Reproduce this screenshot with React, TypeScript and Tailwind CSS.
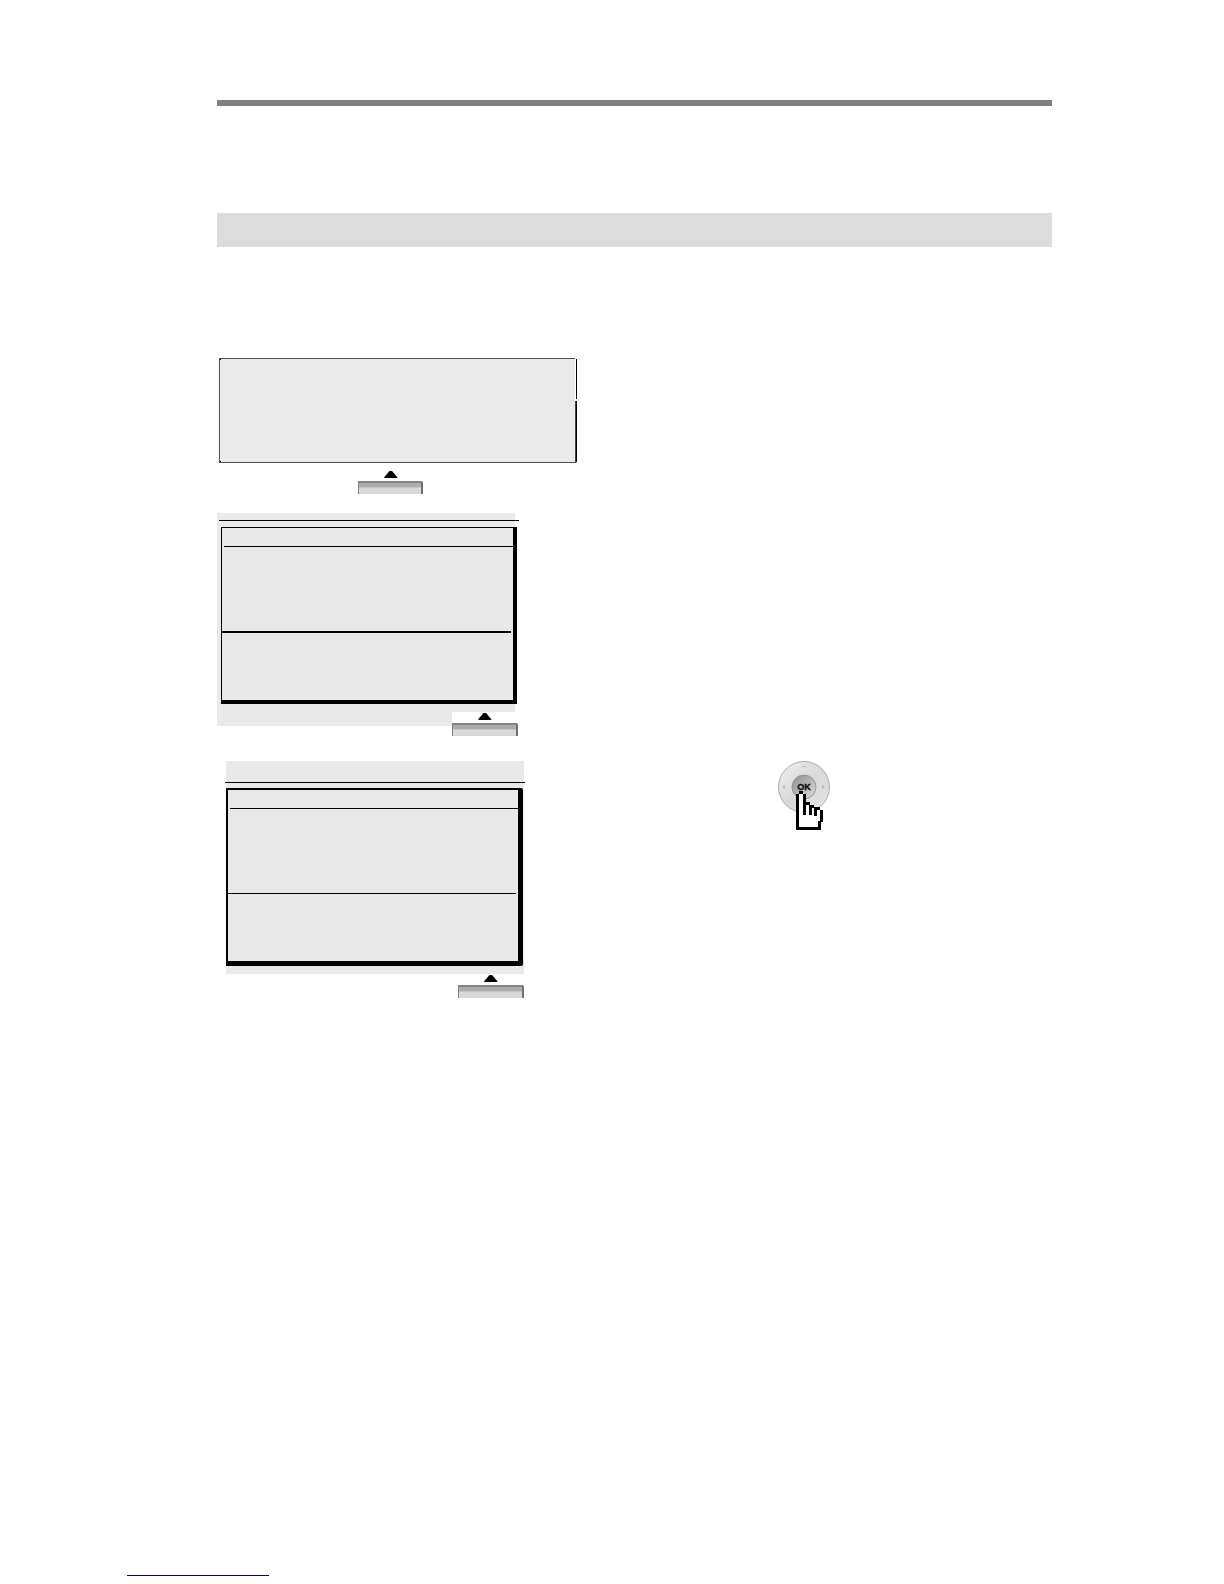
/** Manual page: three phone displays with their soft keys, and the navigation dial. */

function SoftKey({ className }: { className: string }) {
  return (
    <button type="button" aria-label="Soft key" className={`block h-6 bg-white ${className}`}>
      <svg viewBox="0 0 14 8" className="mx-auto mb-[3px] block h-2 w-3.5" aria-hidden="true">
        <path d="M5.5 1 H8 L13.2 7 L13.4 8 H0.2 L0.4 7 Z" fill="#000" />
      </svg>
      <span className="flex h-[13px] flex-col overflow-hidden rounded-tr-xs border-l border-r-2 border-l-[#808080] border-r-[#707070] bg-[#d9d9d9]">
        <span className="block h-0.5 bg-[#858585]" />
        <span className="block h-1 bg-[#acacac]" />
        <span className="block h-px bg-[#c6c6c6]" />
      </span>
    </button>
  );
}

function WideDisplay() {
  return (
    <div className="flex h-[105px] w-[358px]">
      <div className="flex flex-1 flex-col justify-between border border-r-0 border-[#505050] bg-[#eaeaea]">
        <div className="size-px bg-black" />
        <div className="size-px bg-black" />
      </div>
      <div className="flex w-0.5 flex-col">
        <div className="mt-px h-10 border-r border-l border-r-black border-l-white" />
        <div className="h-0.5" />
        <div className="flex-1 rounded-br-[2px] border-r border-l border-r-black border-l-[#444]" />
      </div>
    </div>
  );
}

function MenuDisplay() {
  return (
    <div className="h-[213px] w-[298px] bg-[#e9e9e9] pt-[7px]">
      <div className="-mr-1 ml-0.5 h-px bg-black" />
      <div className="mt-1.5 -mr-0.5 ml-1 flex h-[177px] flex-col border border-r-4 border-b-4 border-black">
        <div className="mt-[18px] ml-0.5 h-px bg-black" />
        <div className="mt-[84px] mr-0.5 h-0.5 bg-black" />
      </div>
    </div>
  );
}

function ListDisplay() {
  return (
    <div className="h-[213px] w-[298px] bg-[#e9e9e9] pt-[21px]">
      <div className="-mx-px h-px bg-black" />
      <div className="mt-[5px] mr-px flex h-[178px] flex-col rounded-r-[2px] border-2 border-r-[5px] border-b-[5px] border-black">
        <div className="mt-[18px] ml-0.5 h-px bg-black" />
        <div className="mt-[84px] mr-0.5 h-px bg-black" />
      </div>
    </div>
  );
}

function Dial() {
  return (
    <button type="button" aria-label="OK" className="block">
      <svg viewBox="0 0 54 70" className="block h-[70px] w-[54px]">
        <defs>
          <linearGradient id="ring" x1="0" y1="0" x2="1" y2="1">
            <stop offset="0" stopColor="#f0f0f0" />
            <stop offset="0.5" stopColor="#d8d8d8" />
            <stop offset="1" stopColor="#e6e6e6" />
          </linearGradient>
          <linearGradient id="hub" x1="0" y1="0" x2="1" y2="1">
            <stop offset="0" stopColor="#8e8e8e" />
            <stop offset="1" stopColor="#dcdcdc" />
          </linearGradient>
        </defs>
        <circle cx="27" cy="26" r="25.5" fill="url(#ring)" stroke="#9a9a9a" strokeWidth="0.8" />
        <circle cx="27" cy="26" r="12" fill="url(#hub)" stroke="#8a8a8a" strokeWidth="0.8" />
        <path d="M24.5 6.5 L27 5 L29.5 6.5" fill="none" stroke="#b5b5b5" />
        <path d="M7.5 24 L5.5 26 L7.5 28 Z M45.5 24 L47.5 26 L45.5 28 Z" fill="#bbb" stroke="#b5b5b5" strokeWidth="0.5" />
        <text
          x="27"
          y="29"
          textAnchor="middle"
          fontFamily="Liberation Sans, sans-serif"
          fontSize="9"
          fontWeight="700"
          fill="#111"
          stroke="#111"
          strokeWidth="0.4"
        >
          OK
        </text>
        {/* pointing hand: white body, then the stepped outline */}
        <path d="M22 32 H27 V43 H34 V45 H38 V47 H43 V50 H45 V60 H43 V68 H21 V33 H22 Z" fill="#fff" />
        <path
          d="M22 30 H26 V33 H22 Z M19 33 H22 V69 H19 Z M26 33 H29 V54 H26 Z M29 41 H33 V44 H29 Z M32 44 H35 V54 H32 Z M35 44 H37 V47 H35 Z M37 46 H40 V55 H37 Z M40 46 H43 V49 H40 Z M43 49 H46 V61 H43 Z M41 60 H44 V69 H41 Z M22 66 H42 V69 H22 Z"
          fill="#000"
        />
      </svg>
    </button>
  );
}

export default function App() {
  return (
    <div className="flex min-h-screen flex-col bg-white pt-[100px] pb-2">
      <main className="pr-[172px] pl-[217px]">
        <header>
          <div className="h-1.5 bg-[#808080]" />
          <div className="mt-[107px] h-[34px] bg-[#dcdcdc]" />
        </header>

        <section className="mt-[111px] ml-0.5">
          <WideDisplay />
          <SoftKey className="mt-[7px] ml-[139px] w-[65px]" />
        </section>

        <section className="mt-[19px]">
          <MenuDisplay />
          <SoftKey className="relative -mt-3.5 ml-[235px] w-[66px]" />
        </section>

        <section className="mt-[25px] grid grid-cols-[416px_minmax(0,1fr)]">
          <div className="ml-[9px]">
            <ListDisplay />
            <SoftKey className="ml-[232px] w-[66px]" />
          </div>
          <div className="pl-36">
            <Dial />
          </div>
        </section>
      </main>

      <footer className="mt-auto pl-[127px]">
        <div className="h-px w-[142px] bg-[#000080]" />
      </footer>
    </div>
  );
}
